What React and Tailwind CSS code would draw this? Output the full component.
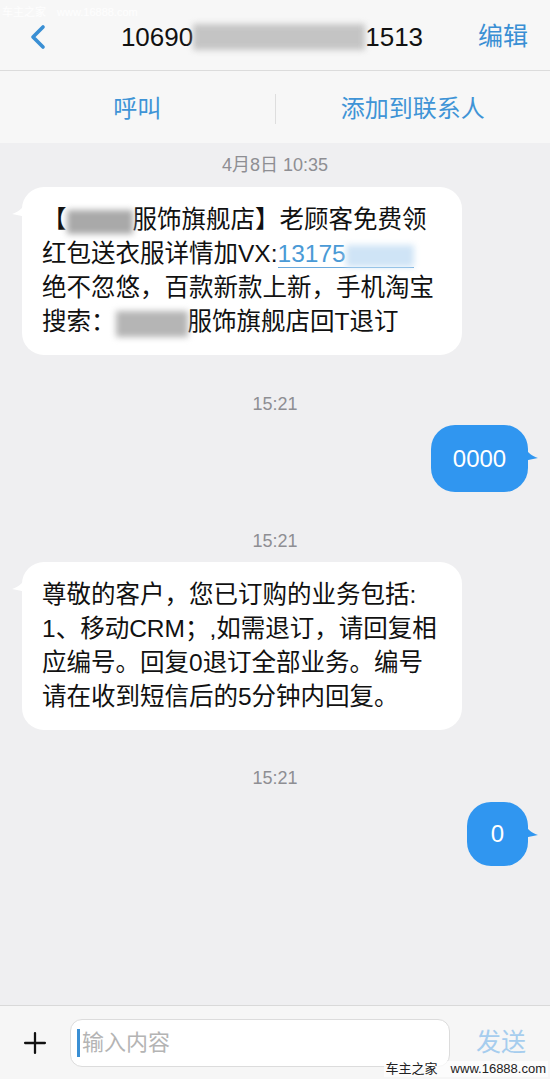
import { ChevronLeft, Plus } from 'lucide-react';

const font = { fontFamily: '"Liberation Sans", "Noto Sans CJK SC", sans-serif' };

const Blur = ({ className }) => (
  <span className={`inline-block align-middle blur-[3px] ${className}`} />
);

const Stamp = ({ children }) => (
  <div className="text-center text-[18px] leading-[20px] text-[#8e8e93]">{children}</div>
);

const InBubble = ({ children }) => (
  <div className="relative ml-[22px] w-[440px] rounded-[22px] bg-white px-[20px] py-[16px] text-[24.5px] leading-[34px] text-[#111]">
    {/* tail */}
    <svg className="absolute -left-[10px] top-[16px]" width="14" height="14" viewBox="0 0 14 14">
      <path d="M14 0 C10 6 6 9 0 11 C5 12 10 13 14 14 Z" fill="#fff" />
    </svg>
    {children}
  </div>
);

const OutBubble = ({ children, className }) => (
  <div className={`relative ml-auto mr-[22px] flex items-center justify-center rounded-[24px] bg-[#3096f0] text-[24px] text-white ${className}`}>
    <svg className="absolute -right-[10px] top-[22px]" width="14" height="14" viewBox="0 0 14 14">
      <path d="M0 0 C4 6 8 9 14 11 C9 12 4 13 0 14 Z" fill="#3096f0" />
    </svg>
    {children}
  </div>
);

export default function App() {
  return (
    <div className="relative flex h-[1079px] w-[550px] flex-col overflow-hidden bg-[#efeff1]" style={font}>
      {/* Top nav */}
      <header className="relative flex h-[71px] items-center border-b border-[#dcdcdc] bg-[#f7f7f7] px-[22px] pt-[4px]">
        <span className="absolute left-[2px] top-[4px] text-[11px] text-white/80">车主之家　www.16888.com</span>
        <ChevronLeft size={40} strokeWidth={2.2} className="text-[#3a8fd4] -ml-[4px]" />
        <div className="flex flex-1 items-center justify-center pl-[8px] text-[26px] text-[#111]">
          <span>10690</span>
          <Blur className="h-[26px] w-[172px] bg-[#b8b8b8] opacity-80" />
          <span>1513</span>
        </div>
        <span className="text-[25px] text-[#3a8fd4]">编辑</span>
      </header>

      {/* Actions */}
      <div className="flex h-[72px] items-center bg-[#f7f7f7] pt-[4px] text-[24px] text-[#3f94d6]">
        <div className="flex flex-1 justify-center">呼叫</div>
        <div className="h-[30px] w-px bg-[#dedede]" />
        <div className="flex flex-1 justify-center">添加到联系人</div>
      </div>

      {/* Messages */}
      <main className="flex-1 pt-[12px]">
        <Stamp>4月8日 10:35</Stamp>
        <div className="mt-[12px]">
          <InBubble>
            <div>
              【<Blur className="h-[24px] w-[66px] bg-[#a9a9a9]" />服饰旗舰店】老顾客免费领
            </div>
            <div>
              红包送衣服详情加VX:
              <span className="border-b border-[#6aa9dc] text-[#4a9ad6]">
                13175
                <Blur className="h-[22px] w-[68px] bg-[#cfe4f6]" />
              </span>
            </div>
            <div>绝不忽悠，百款新款上新，手机淘宝</div>
            <div>
              搜索：<Blur className="h-[26px] w-[72px] bg-[#b5b5b5]" />服饰旗舰店回T退订
            </div>
          </InBubble>
        </div>

        <div className="mt-[39px]">
          <Stamp>15:21</Stamp>
        </div>
        <div className="mt-[11px]">
          <OutBubble className="h-[67px] w-[97px]">0000</OutBubble>
        </div>

        <div className="mt-[39px]">
          <Stamp>15:21</Stamp>
        </div>
        <div className="mt-[11px]">
          <InBubble>
            <div>尊敬的客户，您已订购的业务包括:</div>
            <div>1、移动CRM；,如需退订，请回复相</div>
            <div>应编号。回复0退订全部业务。编号</div>
            <div>请在收到短信后的5分钟内回复。</div>
          </InBubble>
        </div>

        <div className="mt-[38px]">
          <Stamp>15:21</Stamp>
        </div>
        <div className="mt-[14px]">
          <OutBubble className="h-[64px] w-[61px]">0</OutBubble>
        </div>
      </main>

      {/* Composer */}
      <footer className="flex h-[74px] items-center gap-[20px] border-t border-[#d9d9d9] bg-[#f6f6f6] pl-[18px] pr-[24px]">
        <Plus size={34} strokeWidth={1.6} className="text-[#111]" />
        <div className="-ml-[2px] flex h-[48px] w-[380px] items-center rounded-[12px] border border-[#dcdcdc] bg-white pl-[6px]">
          <span className="h-[28px] w-[3px] bg-[#3a8fd4]" />
          <span className="ml-[2px] text-[22px] text-[#b4b4b4]">输入内容</span>
        </div>
        <span className="ml-auto text-[25px] text-[#a6cdee]">发送</span>
      </footer>

      <span className="absolute bottom-[2px] right-[2px] bg-white/70 px-[2px] text-[13px] leading-[16px] text-[#222]">
        车主之家　www.16888.com
      </span>
    </div>
  );
}
